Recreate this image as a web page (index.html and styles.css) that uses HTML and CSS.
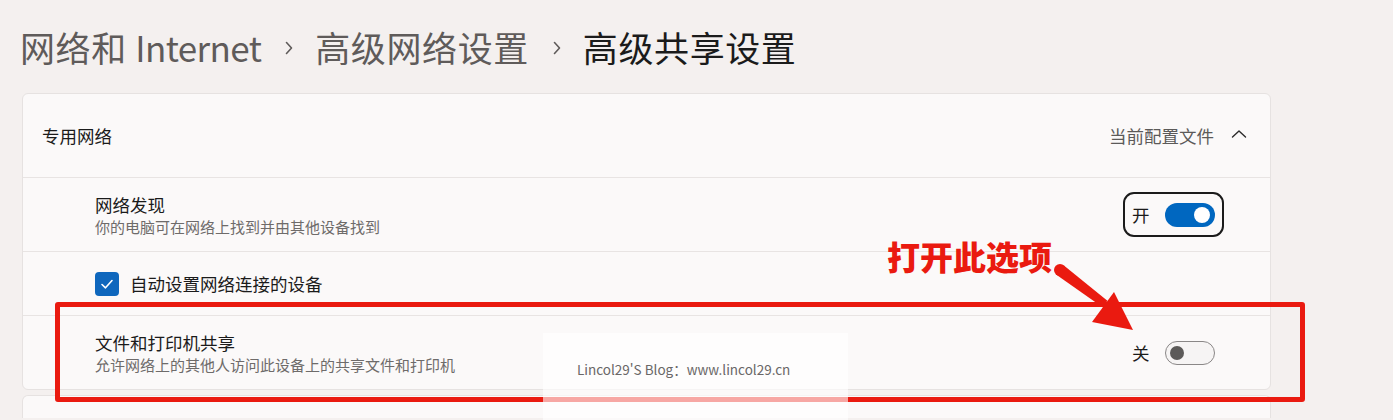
FILE: index.html
```html
<!DOCTYPE html>
<html lang="zh-CN">
<head>
<meta charset="utf-8">
<title>高级共享设置</title>
<link rel="stylesheet" href="styles.css">
</head>
<body>
<main class="page">
  <h1 class="crumbs">
    <span class="crumb">网络和 <span class="latin">Internet</span></span>
    <svg class="sep" width="10" height="16" viewBox="0 0 10 16"><path d="M2.5 2.5 L7.5 8 L2.5 13.5" fill="none" stroke="#5f5b5a" stroke-width="1.6" stroke-linecap="round" stroke-linejoin="round"/></svg>
    <span class="crumb">高级网络设置</span>
    <svg class="sep" width="10" height="16" viewBox="0 0 10 16"><path d="M2.5 2.5 L7.5 8 L2.5 13.5" fill="none" stroke="#5f5b5a" stroke-width="1.6" stroke-linecap="round" stroke-linejoin="round"/></svg>
    <span class="crumb current">高级共享设置</span>
  </h1>

  <section class="card">
    <div class="card-head">
      <span class="head-title">专用网络</span>
      <span class="head-right">
        <span class="head-meta">当前配置文件</span>
        <svg class="chev-up" width="16" height="10" viewBox="0 0 16 10"><path d="M1.5 8 L8 2 L14.5 8" fill="none" stroke="#2b2b2b" stroke-width="1.4" stroke-linecap="round" stroke-linejoin="round"/></svg>
      </span>
    </div>

    <div class="row row-tall">
      <div class="texts">
        <div class="row-title">网络发现</div>
        <div class="row-sub">你的电脑可在网络上找到并由其他设备找到</div>
      </div>
      <div class="control focused">
        <span class="state">开</span>
        <span class="switch on"><span class="knob"></span></span>
      </div>
    </div>

    <div class="row row-short">
      <span class="checkbox">
        <svg width="14" height="12" viewBox="0 0 14 12"><path d="M2 6.5 L5.5 9.8 L12 2.5" fill="none" stroke="#fff" stroke-width="1.6" stroke-linecap="round" stroke-linejoin="round"/></svg>
      </span>
      <span class="row-title">自动设置网络连接的设备</span>
    </div>

    <div class="row row-tall">
      <div class="texts">
        <div class="row-title">文件和打印机共享</div>
        <div class="row-sub">允许网络上的其他人访问此设备上的共享文件和打印机</div>
      </div>
      <div class="control">
        <span class="state">关</span>
        <span class="switch off"><span class="knob"></span></span>
      </div>
    </div>
  </section>

  <section class="card card-next"></section>
</main>

<div class="callout-box"></div>
<div class="callout-text">打开此选项</div>
<svg class="callout-arrow" width="100" height="80" viewBox="0 0 100 80">
  <circle cx="20" cy="15" r="6" fill="#ea1a10"/>
  <polygon points="16.4,19.8 23.6,10.2 67.4,45.8 62.6,52.2" fill="#ea1a10"/>
  <polygon points="74,37 52,67 93,75" fill="#ea1a10"/>
</svg>

<div class="watermark"><span>Lincol29'S Blog：www.lincol29.cn</span></div>
</body>
</html>
```

FILE: styles.css
```css
html, body {
  margin: 0;
  padding: 0;
  height: 420px;
  overflow: hidden;
}

body {
  background: #f4f0ef;
  font-family: "Noto Sans", "Noto Sans CJK SC", sans-serif;
  color: #1b1b1b;
  position: relative;
}

.page {
  padding-left: 22px;
  width: 1249px;
}

.crumbs {
  margin: 0;
  padding-top: 24px;
  height: 46px;
  display: flex;
  align-items: center;
  font-weight: 400;
  font-size: 35px;
  letter-spacing: 0.6px;
  line-height: 46px;
  margin-left: -2px;
}

.crumb {
  color: #5f5b5a;
  font-family: "Noto Sans CJK SC", "Noto Sans", sans-serif;
}

.crumb .latin {
  letter-spacing: -0.6px;
}

.crumb.current {
  color: #1b1b1b;
}

.sep {
  margin: 2px 21px 0 23px;
}

.card {
  margin-top: 23px;
  background: #fbf9f9;
  border: 1px solid #e6e2e1;
  border-radius: 6px;
}

.card-head {
  height: 83px;
  display: flex;
  align-items: center;
  justify-content: space-between;
  padding: 0 23px 0 19px;
  font-family: "Noto Sans CJK SC", sans-serif;
  font-size: 17.5px;
}

.head-title {
  color: #1b1b1b;
}

.head-right {
  display: flex;
  align-items: center;
  gap: 17px;
}

.head-meta {
  color: #5c5a59;
}

.chev-up {
  margin-top: -4px;
}

.row {
  border-top: 1px solid #e8e4e3;
  display: flex;
  align-items: center;
  padding-left: 72px;
  font-family: "Noto Sans CJK SC", sans-serif;
}

.row-tall {
  height: 73px;
  justify-content: space-between;
  padding-right: 46px;
}

.row-short {
  height: 63px;
  gap: 11px;
}

.texts {
  display: flex;
  flex-direction: column;
  padding-top: 2px;
}

.row-title {
  font-size: 17.5px;
  line-height: 22px;
  color: #1b1b1b;
}

.row-sub {
  font-size: 15px;
  line-height: 22px;
  color: #6e6b6a;
}

.checkbox {
  width: 24px;
  height: 24px;
  border-radius: 4px;
  background: #0f67bd;
  display: flex;
  align-items: center;
  justify-content: center;
}

.control {
  display: flex;
  align-items: center;
  gap: 15px;
  height: 41px;
  padding: 0 7px;
  border: 2px solid transparent;
  border-radius: 11px;
  font-size: 17.5px;
  color: #1b1b1b;
}

.control.focused {
  border-color: #1b1b1b;
}

.state {
  width: 18px;
}

.switch {
  width: 50px;
  height: 24px;
  border-radius: 12px;
  box-sizing: border-box;
  display: flex;
  align-items: center;
}

.switch.on {
  background: #0067c0;
  justify-content: flex-end;
  padding-right: 5px;
}

.switch.on .knob {
  width: 16px;
  height: 16px;
  border-radius: 50%;
  background: #fff;
}

.switch.off {
  background: #f6f4f4;
  border: 1px solid #8a8787;
  padding-left: 4px;
}

.switch.off .knob {
  width: 14px;
  height: 14px;
  border-radius: 50%;
  background: #5c5a59;
}

.card-next {
  margin-top: 5px;
  height: 22px;
  border-bottom: 0;
  border-radius: 6px 6px 0 0;
}

.callout-box {
  position: absolute;
  left: 55px;
  top: 302px;
  width: 1240px;
  height: 90px;
  border: 5px solid #ea1a10;
  border-radius: 3px;
}

.callout-text {
  position: absolute;
  left: 887px;
  top: 234px;
  font-family: "Noto Sans CJK SC", sans-serif;
  font-weight: 900;
  font-size: 33px;
  line-height: 44px;
  color: #ea1a10;
}

.callout-arrow {
  position: absolute;
  left: 1040px;
  top: 255px;
}

.watermark {
  position: absolute;
  left: 543px;
  top: 333px;
  width: 305px;
  height: 87px;
  background: rgba(255, 255, 255, 0.62);
  box-sizing: border-box;
  padding: 25px 0 0 34px;
}

.watermark span {
  font-family: "Noto Sans CJK SC", sans-serif;
  font-size: 13.5px;
  line-height: 20px;
  color: #6a6767;
}
```
